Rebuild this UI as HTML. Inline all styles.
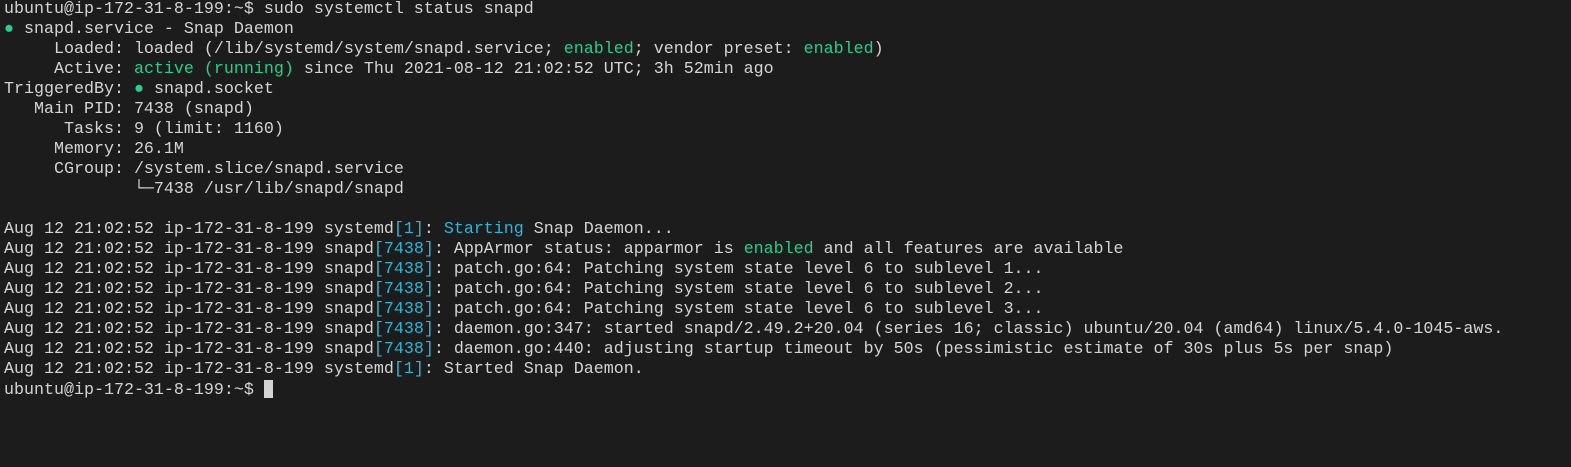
<!DOCTYPE html><html><head><style>
html,body{margin:0;width:1571px;height:467px;background:#1c1c1c;overflow:hidden}
pre{margin:0;padding:0 0 0 4px;font-family:"Liberation Mono","DejaVu Sans Mono",monospace;font-size:16.67px;line-height:20px;color:#d4d4d4;white-space:pre}
.g{color:#23d18b}.c{color:#29b8db}
.cur{display:inline-block;width:9px;height:18px;background:#d4d4d4;vertical-align:-4px}
</style></head><body><pre>ubuntu@ip-172-31-8-199:~$ sudo systemctl status snapd
<span class="g">●</span> snapd.service - Snap Daemon
     Loaded: loaded (/lib/systemd/system/snapd.service; <span class="g">enabled</span>; vendor preset: <span class="g">enabled</span>)
     Active: <span class="g">active (running)</span> since Thu 2021-08-12 21:02:52 UTC; 3h 52min ago
TriggeredBy: <span class="g">●</span> snapd.socket
   Main PID: 7438 (snapd)
      Tasks: 9 (limit: 1160)
     Memory: 26.1M
     CGroup: /system.slice/snapd.service
             └─7438 /usr/lib/snapd/snapd

Aug 12 21:02:52 ip-172-31-8-199 systemd<span class="c">[1]</span>: <span class="c">Starting</span> Snap Daemon...
Aug 12 21:02:52 ip-172-31-8-199 snapd<span class="c">[7438]</span>: AppArmor status: apparmor is <span class="g">enabled</span> and all features are available
Aug 12 21:02:52 ip-172-31-8-199 snapd<span class="c">[7438]</span>: patch.go:64: Patching system state level 6 to sublevel 1...
Aug 12 21:02:52 ip-172-31-8-199 snapd<span class="c">[7438]</span>: patch.go:64: Patching system state level 6 to sublevel 2...
Aug 12 21:02:52 ip-172-31-8-199 snapd<span class="c">[7438]</span>: patch.go:64: Patching system state level 6 to sublevel 3...
Aug 12 21:02:52 ip-172-31-8-199 snapd<span class="c">[7438]</span>: daemon.go:347: started snapd/2.49.2+20.04 (series 16; classic) ubuntu/20.04 (amd64) linux/5.4.0-1045-aws.
Aug 12 21:02:52 ip-172-31-8-199 snapd<span class="c">[7438]</span>: daemon.go:440: adjusting startup timeout by 50s (pessimistic estimate of 30s plus 5s per snap)
Aug 12 21:02:52 ip-172-31-8-199 systemd<span class="c">[1]</span>: Started Snap Daemon.
ubuntu@ip-172-31-8-199:~$ <span class="cur"></span></pre></body></html>
